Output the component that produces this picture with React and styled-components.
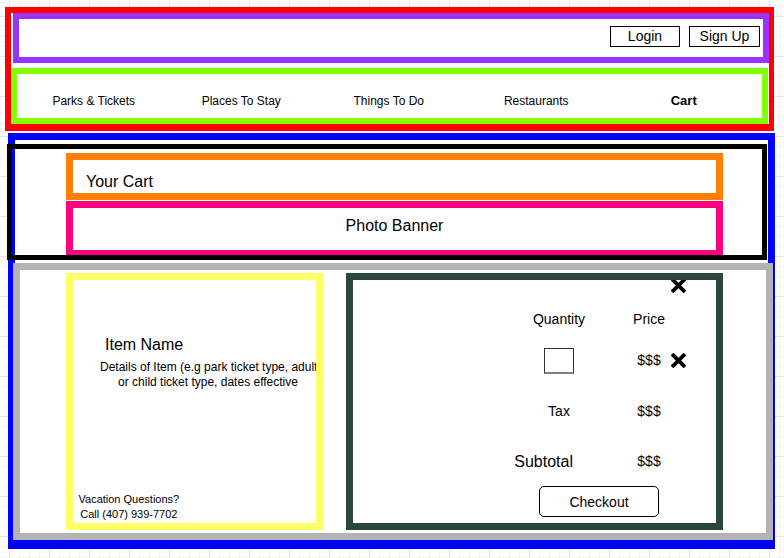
import React from "react";
import styled, { createGlobalStyle } from "styled-components";

const GlobalStyle = createGlobalStyle`
  * {
    box-sizing: border-box;
  }
  html,
  body {
    margin: 0;
    padding: 0;
  }
  body {
    min-height: 100vh;
    font-family: "Liberation Sans", Arial, sans-serif;
    color: #000;
    background-color: #fff;
    background-image: linear-gradient(to right, #e4e4e4 1px, transparent 1px),
      linear-gradient(to bottom, #e4e4e4 1px, transparent 1px),
      linear-gradient(to right, #f4f4f4 1px, transparent 1px),
      linear-gradient(to bottom, #f4f4f4 1px, transparent 1px);
    background-size: 40px 40px, 40px 40px, 10px 10px, 10px 10px;
    background-position: 9px 16px, 9px 16px, 9px 6px, 9px 6px;
  }
`;

const Page = styled.div`
  width: 784px;
  padding: 7px 0 0 5px;
`;

const Header = styled.header`
  width: 769px;
  height: 124px;
  border: solid #ff0000;
  border-width: 6px 5px 7px 6px;
  background: #fff;
  display: flex;
  flex-direction: column;
`;

const TopBar = styled.div`
  margin-left: 2px;
  height: 50px;
  border: 6px solid #9933ff;
  display: flex;
  justify-content: flex-end;
  align-items: flex-start;
  gap: 9px;
  padding: 7px 3px 0 0;
`;

const AuthButton = styled.button`
  width: ${props => props.$width}px;
  height: 21px;
  padding: 0;
  border: 1px solid #000;
  background: #fff;
  font-family: inherit;
  font-size: 14px;
  line-height: 19px;
  color: #000;
`;

const NavBar = styled.nav`
  margin: 5px 1px 0 0;
  height: 56px;
  border: 6px solid #80ff00;
  display: grid;
  grid-template-columns: repeat(5, 147.5px);
  align-items: center;
  padding: 9px 0 0 3px;
`;

const NavItem = styled.span`
  text-align: center;
  font-size: ${props => (props.$active ? 13 : 12)}px;
  font-weight: ${props => (props.$active ? 700 : 400)};
`;

const Main = styled.main`
  margin: 2px 0 0 3px;
  width: 767px;
  height: 416px;
  border: solid #0000ff;
  border-width: 7px 7px 9px 7px;
  background: #fff;
  display: flex;
  flex-direction: column;
`;

const TitleSection = styled.section`
  margin: 4px 1px 0 -8px;
  height: 116px;
  border: 5px solid #000;
  display: flex;
  flex-direction: column;
  padding: 4px 39px 0 54px;
`;

const CartTitle = styled.div`
  height: 47px;
  border: 7px solid #ff8000;
  padding: 13px 0 0 13px;
  font-size: 16px;
  line-height: 18px;
`;

const Banner = styled.div`
  margin-top: 1px;
  height: 55px;
  border: solid #ff0080;
  border-width: 7px 7px 5px 7px;
  padding-top: 9px;
  text-align: center;
  font-size: 16px;
  line-height: 18px;
`;

const CartSection = styled.section`
  margin: 3px -5px 0 -2px;
  height: 277px;
  border: 7px solid #b3b3b3;
  display: flex;
  align-items: flex-start;
  padding: 3px 0 0 46px;
`;

const ItemPanel = styled.div`
  width: 257px;
  height: 257px;
  border: 7px solid #ffff66;
  display: flex;
  flex-direction: column;
  overflow: hidden;
`;

const ItemName = styled.div`
  margin: 56px 0 0 32px;
  font-size: 16px;
  line-height: 18px;
`;

const ItemDetails = styled.div`
  margin-top: 6px;
  padding-left: 27px;
  font-size: 12px;
  line-height: 14.5px;
  text-align: center;
  white-space: nowrap;
`;

const HelpLine = styled.div`
  margin: auto 0 2px 5.5px;
  width: fit-content;
  font-size: 11px;
  line-height: 14.3px;
  text-align: center;
`;

const SummaryPanel = styled.div`
  position: relative;
  margin-left: 23px;
  width: 377px;
  height: 257px;
  border: 7px solid #2b453f;
  display: flex;
  flex-direction: column;
  overflow: hidden;
`;

const CornerClose = styled.span`
  position: absolute;
  top: -2px;
  left: 318px;
  display: flex;
`;

const SummaryRow = styled.div`
  margin-top: ${props => props.$gap}px;
  height: ${props => props.$height}px;
  display: grid;
  grid-template-columns: 176px 60px 38px 44px 15px;
  align-items: center;
`;

const Cell = styled.span`
  grid-column: ${props => props.$col};
  text-align: center;
  font-size: ${props => props.$size || 14}px;
  line-height: 1.15;
`;

const SubtotalLabel = styled.span`
  grid-column: 1 / 3;
  justify-self: end;
  margin: 2px 16px 0 0;
  font-size: 16px;
`;

const QuantityBox = styled.div`
  grid-column: 2;
  justify-self: center;
  width: 30px;
  height: 26px;
  border: 1px solid #333;
  border-bottom: 2px solid #808080;
  background: #fff;
`;

const RemoveCell = styled.span`
  grid-column: 5;
  display: flex;
  justify-content: center;
`;

const CheckoutButton = styled.button`
  grid-column: 2 / 5;
  justify-self: start;
  margin-left: 10px;
  width: 120px;
  height: 31px;
  padding: 0;
  border: 1px solid #000;
  border-radius: 5px;
  background: #fff;
  font-family: inherit;
  font-size: 14px;
  color: #000;
`;

function HeavyX() {
  return (
    <svg width="15" height="15" viewBox="0 0 15 15" aria-hidden="true">
      <path d="M2.4 2.4 L12.6 12.6 M12.6 2.4 L2.4 12.6" stroke="#000" strokeWidth="3.8" strokeLinecap="square" fill="none" />
    </svg>
  );
}

const navLinks = ["Parks & Tickets", "Places To Stay", "Things To Do", "Restaurants", "Cart"];

export default function App() {
  return (
    <>
      <GlobalStyle />
      <Page>
        <Header>
          <TopBar>
            <AuthButton $width={70}>Login</AuthButton>
            <AuthButton $width={71}>Sign Up</AuthButton>
          </TopBar>
          <NavBar>
            {navLinks.map(link => (
              <NavItem key={link} $active={link === "Cart"}>
                {link}
              </NavItem>
            ))}
          </NavBar>
        </Header>

        <Main>
          <TitleSection>
            <CartTitle>Your Cart</CartTitle>
            <Banner>Photo Banner</Banner>
          </TitleSection>

          <CartSection>
            <ItemPanel>
              <ItemName>Item Name</ItemName>
              <ItemDetails>
                Details of Item (e.g park ticket type, adult
                <br />
                or child ticket type, dates effective
              </ItemDetails>
              <HelpLine>
                Vacation Questions?
                <br />
                Call (407) 939-7702
              </HelpLine>
            </ItemPanel>

            <SummaryPanel>
              <CornerClose>
                <HeavyX />
              </CornerClose>
              <SummaryRow $gap={26} $height={26}>
                <Cell $col={2}>Quantity</Cell>
                <Cell $col={4}>Price</Cell>
              </SummaryRow>
              <SummaryRow $gap={15} $height={27}>
                <QuantityBox />
                <Cell $col={4}>$$$</Cell>
                <RemoveCell>
                  <HeavyX />
                </RemoveCell>
              </SummaryRow>
              <SummaryRow $gap={24} $height={26}>
                <Cell $col={2}>Tax</Cell>
                <Cell $col={4}>$$$</Cell>
              </SummaryRow>
              <SummaryRow $gap={24} $height={26}>
                <SubtotalLabel>Subtotal</SubtotalLabel>
                <Cell $col={4}>$$$</Cell>
              </SummaryRow>
              <SummaryRow $gap={12} $height={31}>
                <CheckoutButton>Checkout</CheckoutButton>
              </SummaryRow>
            </SummaryPanel>
          </CartSection>
        </Main>
      </Page>
    </>
  );
}
